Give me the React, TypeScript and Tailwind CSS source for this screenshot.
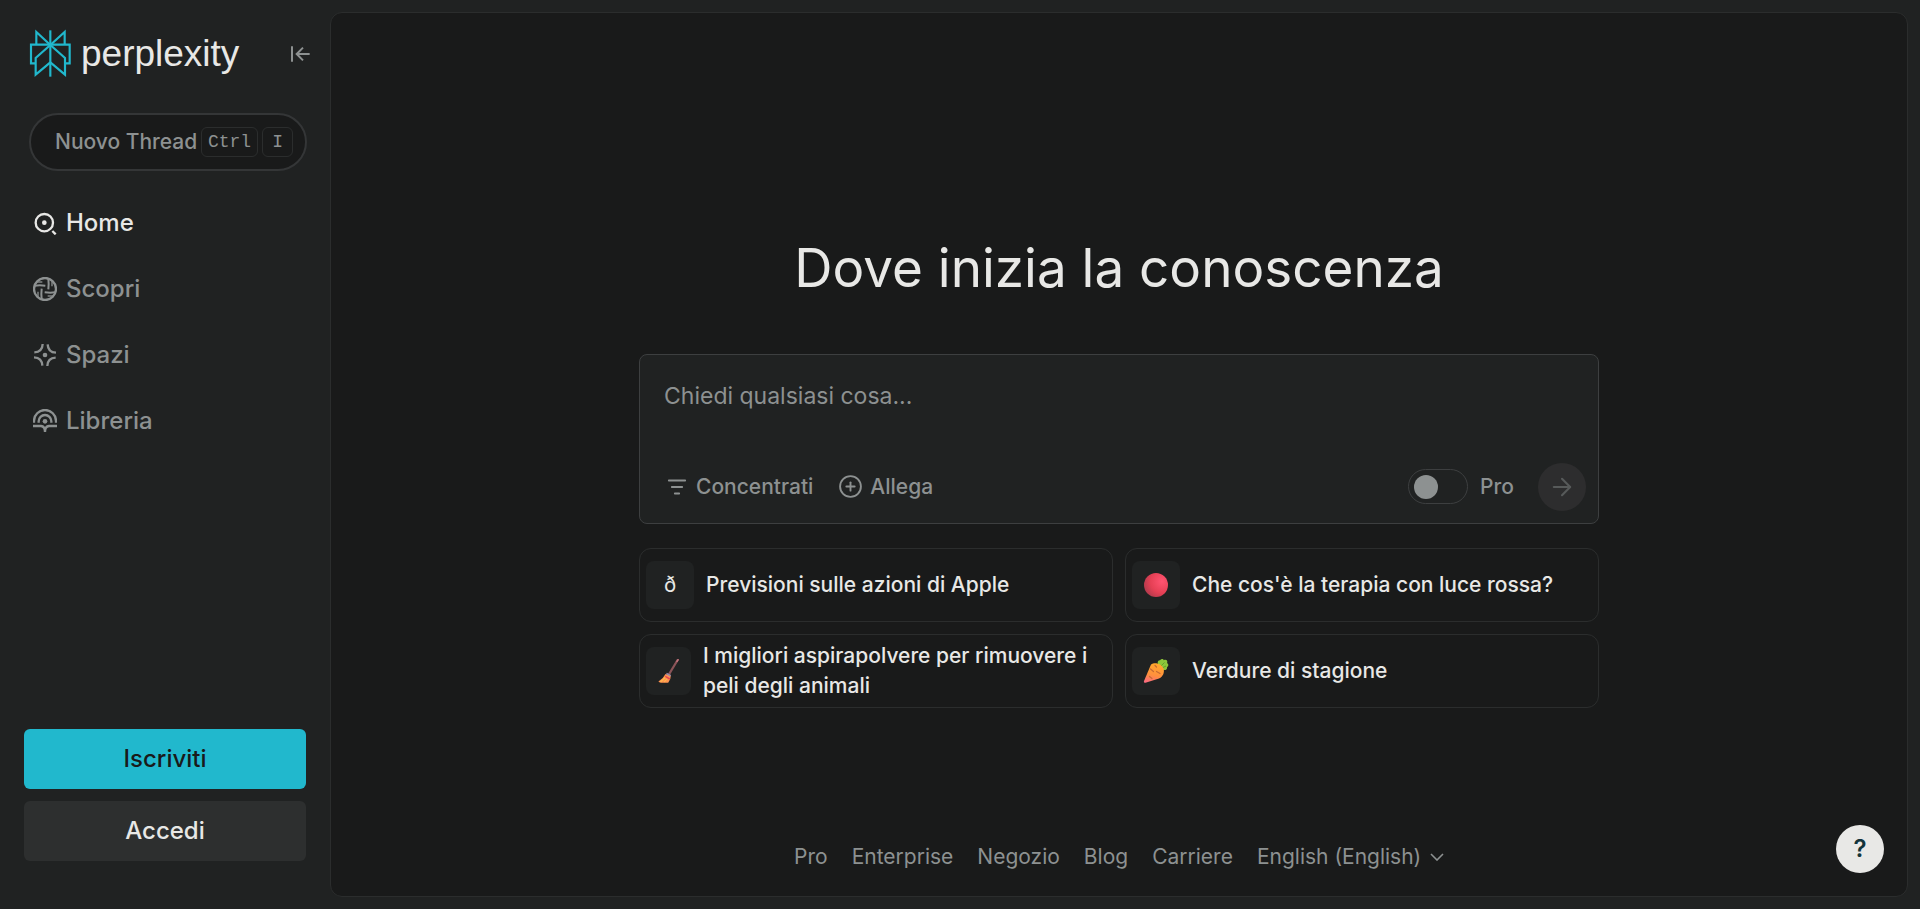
import { useState, type ReactNode } from "react";
import clsx from "clsx";
import { ArrowRight, CirclePlus } from "lucide-react";

const NAV_ITEMS = [
  { label: "Home", icon: <HomeIcon />, active: true },
  { label: "Scopri", icon: <DiscoverIcon /> },
  { label: "Spazi", icon: <SpacesIcon /> },
  { label: "Libreria", icon: <LibraryIcon /> },
];

const SUGGESTIONS = [
  { label: "Previsioni sulle azioni di Apple", icon: <span>ð</span> },
  { label: "Che cos'è la terapia con luce rossa?", icon: <RedCircle /> },
  { label: "I migliori aspirapolvere per rimuovere i peli degli animali", icon: <Broom /> },
  { label: "Verdure di stagione", icon: <Carrot /> },
];

const FOOTER_LINKS = ["Pro", "Enterprise", "Negozio", "Blog", "Carriere"];

function LogoMark() {
  return (
    <svg width="43" height="49" viewBox="87 89 129 147" fill="none" stroke="#21b8cd" strokeWidth="6.5" aria-hidden="true">
      <path d="M151 93V232" />
      <path d="M151 137L109 98V137" />
      <path d="M151 137L194 98V137" />
      <path d="M107 192H93V136H209V192H195" />
      <path d="M151 137L107 176V226L151 189" />
      <path d="M151 137L195 176V226L151 189" />
    </svg>
  );
}

function CollapseIcon() {
  return (
    <svg width="20" height="18" viewBox="870 131 60 54" fill="none" stroke="currentColor" strokeWidth="6" aria-hidden="true">
      <path d="M876 135V181" />
      <path d="M929 158H892M909 139L890 158L909 177" />
    </svg>
  );
}

function NavIcon({ children }: { children: ReactNode }) {
  return (
    <svg width="24" height="24" viewBox="0 0 72 72" fill="none" stroke="currentColor" strokeWidth="7" aria-hidden="true">
      {children}
    </svg>
  );
}

function HomeIcon() {
  return (
    <NavIcon>
      <circle cx="34" cy="35" r="26" />
      <circle cx="34" cy="35" r="7" fill="currentColor" stroke="none" />
      <path d="M58 60L68 70" />
    </NavIcon>
  );
}

function DiscoverIcon() {
  return (
    <NavIcon>
      <circle cx="36" cy="36" r="33" />
      {[0, 90, 180, 270].map((deg) => (
        <g key={deg} transform={`rotate(${deg} 36 36)`} strokeWidth="6">
          <path d="M5 26Q20 24 37 26" />
          <path d="M12 15H28" strokeWidth="4" />
        </g>
      ))}
    </NavIcon>
  );
}

function SpacesIcon() {
  return (
    <NavIcon>
      {[0, 90, 180, 270].map((deg) => (
        <path key={deg} d="M4 28Q28 27 29 3" transform={`rotate(${deg} 36 36)`} />
      ))}
      <circle cx="36" cy="36" r="7" fill="currentColor" stroke="none" />
    </NavIcon>
  );
}

function LibraryIcon() {
  return (
    <NavIcon>
      <path d="M3 41V36A33 33 0 0 1 69 36V41" />
      <path d="M17 41V37A19 19 0 0 1 55 37V41" />
      <circle cx="36" cy="37" r="7" fill="currentColor" stroke="none" />
      <path d="M0 51H24Q36 52 36 69Q36 52 48 51H72" />
    </NavIcon>
  );
}

function FilterIcon() {
  return (
    <svg width="20" height="20" viewBox="0 0 20 20" fill="none" stroke="currentColor" strokeWidth="1.8" strokeLinecap="round" aria-hidden="true">
      <path d="M1.8 3.5H18.2M4.8 10H15.2M7.8 16.5H12.2" />
    </svg>
  );
}

function RedCircle() {
  return (
    <svg width="24" height="24" viewBox="0 0 24 24" aria-hidden="true">
      <defs>
        <radialGradient id="red" cx="0.75" cy="0.35" r="0.8">
          <stop offset="0" stopColor="#ff5471" />
          <stop offset="0.6" stopColor="#e64055" />
          <stop offset="1" stopColor="#b23a4c" />
        </radialGradient>
      </defs>
      <circle cx="12" cy="12" r="12" fill="url(#red)" />
    </svg>
  );
}

function Broom() {
  return (
    <svg className="shrink-0" width="21" height="24" viewBox="0 0 21 24" aria-hidden="true">
      <path d="M19.6 1L11.4 14.6" stroke="#8b5458" strokeWidth="2.2" strokeLinecap="round" />
      <path d="M20 0.8L19 2.4" stroke="#c2737c" strokeWidth="1.6" strokeLinecap="round" />
      <path d="M7.5 15Q5 20 0.4 22.6Q1 23.6 3 23.7H10.2Q13 20.5 12.8 16.6Z" fill="#ff9350" />
      <path d="M2.5 22.8L8.4 17.5M6.2 23L10.2 18.5" stroke="#ffbd4a" strokeWidth="1.1" />
      <path d="M7.2 17.4L11.8 20" stroke="#e8434f" strokeWidth="1.5" />
      <path d="M8.4 14.5L12.7 16.7" stroke="#9a8ba8" strokeWidth="1.8" />
    </svg>
  );
}

function Carrot() {
  return (
    <svg width="26" height="24" viewBox="0 0 26 24" aria-hidden="true">
      <defs>
        <linearGradient id="carrot" x1="0.5" y1="0" x2="0.3" y2="1">
          <stop offset="0" stopColor="#ffa92b" />
          <stop offset="0.6" stopColor="#ff8f3e" />
          <stop offset="1" stopColor="#fb6a80" />
        </linearGradient>
      </defs>
      <path
        d="M15.5 7C14 4.500 14.500 1 17 1.200C18.500 -0.500 20.300 0 20.800 1.200C23 -0.200 25.200 1.500 24 4C26 5 25.500 7.500 24 8C24.500 10.500 22 12 19.500 10.500Z"
        fill="#8cc63a"
      />
      <path d="M17.500 7.500L21.500 3.500M19 9L23 7" stroke="#63a32a" strokeWidth="1" />
      <path d="M8 5.500C12 2.500 19 5 20.500 9.500C21.700 13.500 20 17.500 16 19.500L2.500 23.800C1.200 24 0.600 23.200 1 22Z" fill="url(#carrot)" />
      <path d="M7.500 10L10.500 12.500M13.500 12.500L17 14.500M6.500 17.500L9 19.500M12 6.500L13.500 8" stroke="#c66a34" strokeWidth="1.2" strokeLinecap="round" />
    </svg>
  );
}

function Sidebar() {
  return (
    <aside className="flex w-[330px] shrink-0 flex-col px-6 pt-[29px] pb-12">
      <div className="flex items-center justify-between pl-[5px]">
        <a href="#" className="flex items-center gap-[9px] text-[#e8e8e6]">
          <LogoMark />
          <span className="font-['Liberation_Sans',sans-serif] text-[37px] leading-[46px]">perplexity</span>
        </a>
        <button type="button" aria-label="Collapse" className="-mr-1 text-[#8d9191]">
          <CollapseIcon />
        </button>
      </div>

      <button
        type="button"
        className="mt-[35px] ml-[5px] flex h-[58px] w-[278px] items-center rounded-full border-2 border-[#343637] bg-[#191a1a] pr-3 pl-6 text-[21px] font-medium text-[#8d9191]"
      >
        <span className="whitespace-nowrap">Nuovo Thread</span>
        <span className="ml-auto flex gap-1">
          <kbd className="rounded-md border border-[#2b2d2d] px-1.5 font-['Liberation_Mono',monospace] text-[18px] leading-7 font-normal">Ctrl</kbd>
          <kbd className="rounded-md border border-[#2b2d2d] px-[9px] font-['Liberation_Mono',monospace] text-[18px] leading-7 font-normal">I</kbd>
        </span>
      </button>

      <nav className="mt-7 flex flex-col gap-[18px] pl-[9px]">
        {NAV_ITEMS.map((item) => (
          <a
            key={item.label}
            href="#"
            className={clsx(
              "flex h-12 items-center gap-[9px] text-2xl font-medium",
              item.active ? "text-[#e8e8e6]" : "text-[#8d9191]"
            )}
          >
            {item.icon}
            {item.label}
          </a>
        ))}
      </nav>

      <div className="mt-auto flex flex-col gap-3 text-2xl font-medium">
        <button type="button" className="h-[60px] rounded-md bg-[#21b8cd] text-[#191a1a]">
          Iscriviti
        </button>
        <button type="button" className="h-[60px] rounded-md bg-[#2d2f2f] text-[#e8e8e6]">
          Accedi
        </button>
      </div>
    </aside>
  );
}

function SearchBox() {
  const [query, setQuery] = useState("");
  const [pro, setPro] = useState(false);

  return (
    <form
      className="flex flex-col rounded-lg border border-[#3d3f40] bg-[#202222] p-3 text-[21px] font-medium text-[#8d9191]"
      onSubmit={(e) => e.preventDefault()}
    >
      <textarea
        aria-label="Chiedi qualsiasi cosa..."
        placeholder="Chiedi qualsiasi cosa..."
        value={query}
        onChange={(e) => setQuery(e.target.value)}
        rows={2}
        className="mb-2 h-[88px] w-full resize-none px-3 pt-[11px] text-[23px] leading-9 font-normal text-[#e8e8e6] outline-none placeholder:text-[#8d9191]"
      />
      <div className="flex h-12 items-center">
        <button type="button" className="ml-[15px] flex items-center gap-[9px]">
          <FilterIcon />
          Concentrati
        </button>
        <button type="button" className="ml-[25px] flex items-center gap-[7px]">
          <CirclePlus size={25} strokeWidth={1.8} />
          Allega
        </button>
        <label className="ml-auto flex cursor-pointer items-center gap-3">
          <input
            type="checkbox"
            role="switch"
            checked={pro}
            onChange={(e) => setPro(e.target.checked)}
            className="flex h-[35px] w-[60px] appearance-none items-center rounded-full border border-[#3d3f40] px-[5px] before:size-6 before:rounded-full before:bg-[#8d9191] checked:justify-end checked:before:bg-[#21b8cd]"
          />
          Pro
        </label>
        <button
          type="submit"
          aria-label="Invia"
          disabled={!query}
          className="ml-6 flex size-12 items-center justify-center rounded-full bg-[#2d2d2e] text-[#575a5a]"
        >
          <ArrowRight size={28} strokeWidth={1.8} />
        </button>
      </div>
    </form>
  );
}

export default function App() {
  return (
    <div className="flex min-h-screen bg-[#202222] font-['Inter',sans-serif]">
      <Sidebar />

      <main className="my-3 mr-3 flex min-w-0 flex-1 flex-col rounded-xl border border-[#2b2d2d] bg-[#191a1a] text-[#e8e8e6]">
        <div className="mx-auto flex w-full max-w-[960px] flex-1 flex-col justify-center pt-[114px]">
          <h1 className="text-center text-[53px] leading-[60px]">Dove inizia la conoscenza</h1>
          <div className="mt-14">
            <SearchBox />
          </div>
          <div className="mt-6 grid grid-cols-2 gap-3">
            {SUGGESTIONS.map((s) => (
              <button
                key={s.label}
                type="button"
                className="flex h-[74px] items-center gap-3 rounded-xl border border-[#2b2d2d] px-1.5 text-left text-[21px] leading-[30px] font-medium"
              >
                <span className="flex h-12 w-12 min-w-[45px] items-center justify-center rounded-lg bg-[#202222] font-normal">
                  {s.icon}
                </span>
                <span>{s.label}</span>
              </button>
            ))}
          </div>
        </div>

        <footer className="flex items-center justify-center gap-6 pt-6 pb-6 text-[21px] leading-[30px] text-[#8d9191]">
          {FOOTER_LINKS.map((link) => (
            <a key={link} href="#">
              {link}
            </a>
          ))}
          <span className="flex items-center gap-2">
            <select aria-label="Language" className="appearance-none bg-transparent outline-none">
              <option>English (English)</option>
            </select>
            <svg width="14" height="8" viewBox="0 0 14 8" fill="none" stroke="currentColor" strokeWidth="1.6" aria-hidden="true">
              <path d="M1 1L7 7L13 1" />
            </svg>
          </span>
        </footer>
      </main>

      <button
        type="button"
        aria-label="Help"
        className="fixed right-9 bottom-9 flex size-12 items-center justify-center rounded-full bg-[#e8e8e6] text-2xl font-semibold text-[#13343b]"
      >
        ?
      </button>
    </div>
  );
}
